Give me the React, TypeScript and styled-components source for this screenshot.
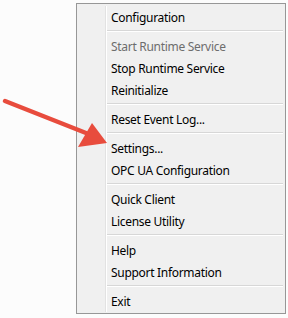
import styled, { createGlobalStyle } from "styled-components";

type Entry = { label?: string; disabled?: boolean; separator?: boolean };

const ENTRIES: Entry[] = [
  { label: "Configuration" },
  { separator: true },
  { label: "Start Runtime Service", disabled: true },
  { label: "Stop Runtime Service" },
  { label: "Reinitialize" },
  { separator: true },
  { label: "Reset Event Log..." },
  { separator: true },
  { label: "Settings..." },
  { label: "OPC UA Configuration" },
  { separator: true },
  { label: "Quick Client" },
  { label: "License Utility" },
  { separator: true },
  { label: "Help" },
  { label: "Support Information" },
  { separator: true },
  { label: "Exit" },
];

const GlobalStyle = createGlobalStyle`
  html, body {
    margin: 0;
    padding: 0;
    background: #fcfcfc;
  }
  body {
    font-family: "Noto Sans", "Open Sans", sans-serif;
  }
`;

const Page = styled.div`
  position: relative;
  width: 288px;
  height: 318px;
  padding: 3px 0 0 76px;
  box-sizing: border-box;
`;

const Menu = styled.div`
  width: 210px;
  box-sizing: border-box;
  border: 1px solid #979797;
  background: #f0f0f0;
  padding: 2px 2px 1px 2px;
`;

const Row = styled.div<{ $sep?: boolean }>`
  display: grid;
  grid-template-columns: 27px 1fr;
  height: ${(p) => (p.$sep ? 7 : 22)}px;
`;

const Gutter = styled.div`
  border-right: 1px solid #e2e2e2;
  box-shadow: 1px 0 0 #ffffff;
`;

const Label = styled.div<{ $disabled?: boolean }>`
  display: flex;
  align-items: center;
  padding-left: 5px;
  font-size: 12px;
  letter-spacing: -0.3px;
  color: ${(p) => (p.$disabled ? "#6d6d6d" : "#000000")};
  white-space: nowrap;
`;

const Line = styled.div`
  margin: 2px 0 0 1px;
  border-top: 1px solid #d7d7d7;
  border-bottom: 1px solid #ffffff;
  box-sizing: border-box;
  height: 2px;
`;

const Arrow = styled.svg`
  position: absolute;
  left: 0;
  top: 0;
`;

export default function App() {
  return (
    <>
      <GlobalStyle />
      <Page>
        <Menu>
          {ENTRIES.map((e, i) =>
            e.separator ? (
              <Row key={i} $sep>
                <Gutter />
                <Line />
              </Row>
            ) : (
              <Row key={i}>
                <Gutter />
                <Label $disabled={e.disabled}>{e.label}</Label>
              </Row>
            )
          )}
        </Menu>
        <Arrow width="120" height="160" viewBox="0 0 120 160">
          <line
            x1="5"
            y1="101"
            x2="86"
            y2="133"
            stroke="#e84c3d"
            strokeWidth="4.5"
            strokeLinecap="round"
          />
          <polygon points="92,123 78,147 107,143" fill="#e84c3d" />
        </Arrow>
      </Page>
    </>
  );
}
